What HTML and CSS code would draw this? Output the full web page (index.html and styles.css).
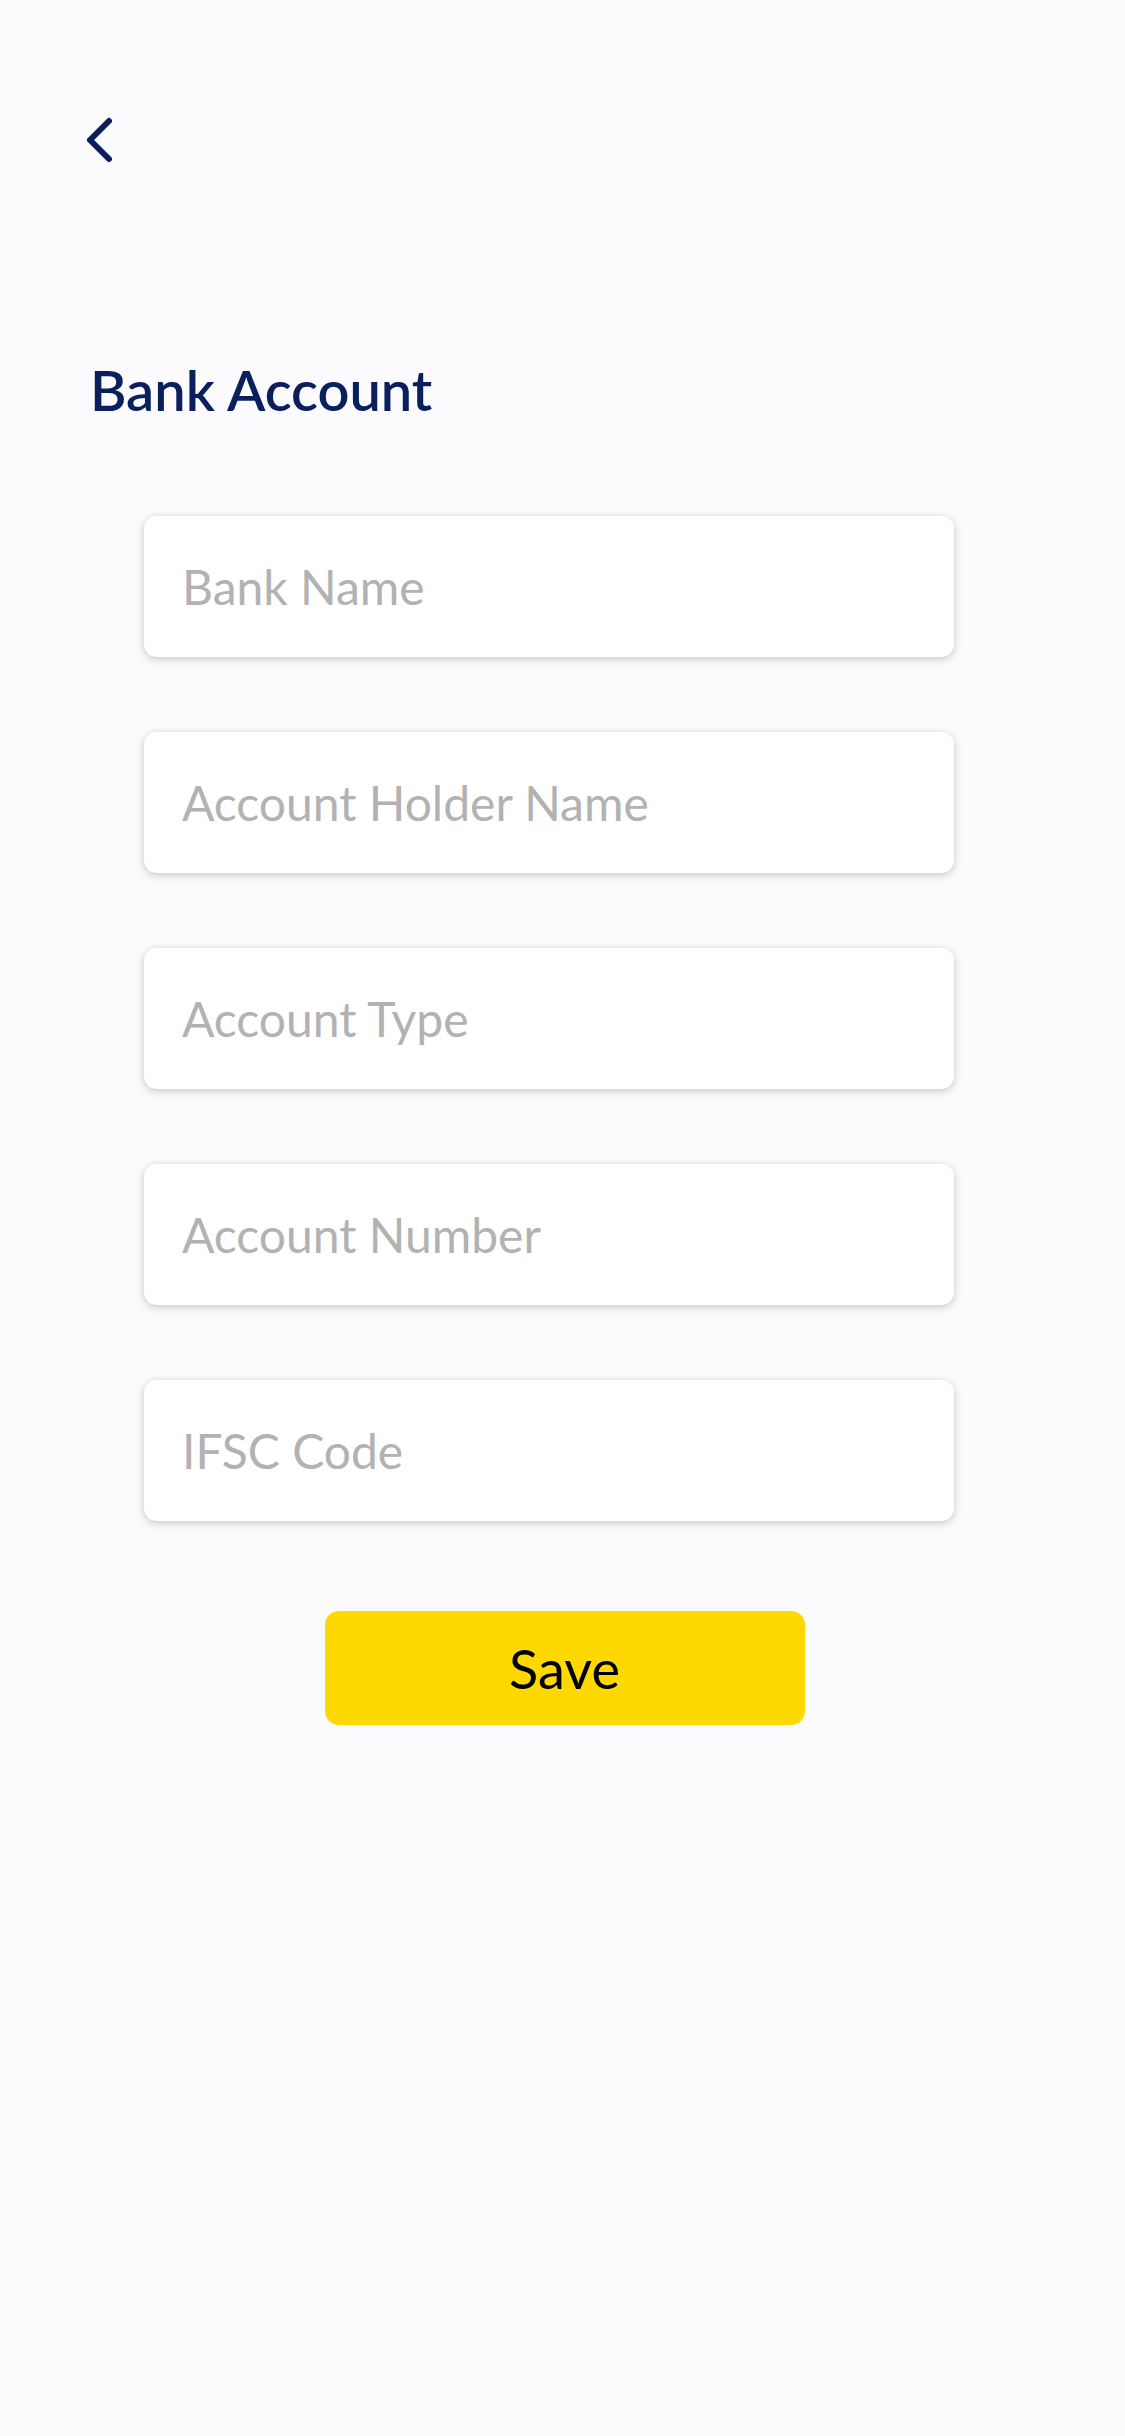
FILE: index.html
```html
<!DOCTYPE html>
<html lang="en">
<head>
<meta charset="utf-8">
<title>Bank Account</title>
<link rel="stylesheet" href="styles.css">
</head>
<body>
  <header class="topbar">
    <button class="back" aria-label="Back">
      <svg width="30" height="50" viewBox="0 0 30 50" aria-hidden="true">
        <polyline points="25,6 6,25 25,44" fill="none" stroke="#0a1f5c" stroke-width="6" stroke-linecap="round" stroke-linejoin="round"/>
      </svg>
    </button>
  </header>
  <h1 class="title">Bank Account</h1>
  <form class="form">
    <input class="field" type="text" placeholder="Bank Name">
    <input class="field" type="text" placeholder="Account Holder Name">
    <input class="field" type="text" placeholder="Account Type">
    <input class="field" type="text" placeholder="Account Number">
    <input class="field" type="text" placeholder="IFSC Code">
  </form>
  <div class="actions">
    <button class="save" type="button">Save</button>
  </div>
</body>
</html>
```
FILE: styles.css
```css
html, body {
  margin: 0;
  padding: 0;
  background: #fbfbfd;
  font-family: Lato, "Open Sans", sans-serif;
}
body {
  min-height: 2436px;
}
.topbar {
  padding: 115px 0 0 84px;
  height: 50px;
}
.back {
  display: block;
  padding: 0;
  margin: 0;
  border: 0;
  background: none;
  width: 30px;
  height: 50px;
}
.back svg {
  display: block;
}
.title {
  margin: 195px 0 0 90px;
  font-size: 56px;
  line-height: 60px;
  font-weight: 600;
  color: #0a1f5c;
  letter-spacing: 0;
}
.form {
  display: flex;
  flex-direction: column;
  gap: 75px;
  margin: 96px 0 0 144px;
  width: 810px;
}
.field {
  box-sizing: border-box;
  width: 810px;
  height: 141px;
  border: 0;
  border-radius: 13px;
  background: #ffffff;
  box-shadow: 0 2px 8px rgba(0, 0, 0, 0.22);
  padding: 0 0 0 38px;
  font-family: Lato, "Open Sans", sans-serif;
  font-size: 48px;
  color: #333;
  outline: none;
}
.field::placeholder {
  color: #b2b2b2;
  opacity: 1;
}
.actions {
  display: flex;
  justify-content: center;
  margin-top: 90px;
  padding-left: 4px;
}
.save {
  width: 480px;
  height: 114px;
  border: 0;
  border-radius: 14px;
  background: #ffd800;
  color: #000;
  font-family: Lato, "Open Sans", sans-serif;
  font-size: 54px;
  padding: 0;
}
```
